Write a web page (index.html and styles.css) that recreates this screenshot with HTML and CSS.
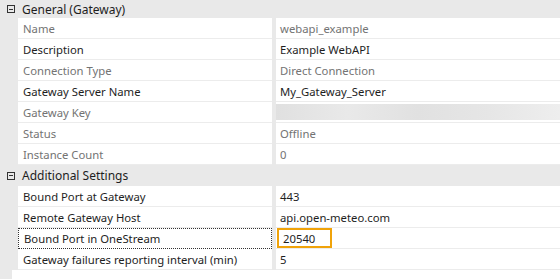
FILE: index.html
```html
<!DOCTYPE html>
<html lang="en">
<head>
    <meta charset="UTF-8">
    <title>Gateway Properties</title>
    <link rel="stylesheet" href="styles.css">
</head>
<body>
    <div class="grid">
        <!-- General -->
        <div class="group">
            <span class="toggle"></span>
            <span>General (Gateway)</span>
        </div>
        <div class="row readonly">
            <div class="gutter"></div>
            <div class="label">Name</div>
            <div class="split"></div>
            <div class="value">webapi_example</div>
        </div>
        <div class="row">
            <div class="gutter"></div>
            <div class="label">Description</div>
            <div class="split"></div>
            <div class="value">Example WebAPI</div>
        </div>
        <div class="row readonly">
            <div class="gutter"></div>
            <div class="label">Connection Type</div>
            <div class="split"></div>
            <div class="value">Direct Connection</div>
        </div>
        <div class="row">
            <div class="gutter"></div>
            <div class="label">Gateway Server Name</div>
            <div class="split"></div>
            <div class="value">My_Gateway_Server</div>
        </div>
        <div class="row readonly">
            <div class="gutter"></div>
            <div class="label">Gateway Key</div>
            <div class="split"></div>
            <div class="value"><div class="redacted"></div></div>
        </div>
        <div class="row readonly">
            <div class="gutter"></div>
            <div class="label">Status</div>
            <div class="split"></div>
            <div class="value">Offline</div>
        </div>
        <div class="row readonly">
            <div class="gutter"></div>
            <div class="label">Instance Count</div>
            <div class="split"></div>
            <div class="value">0</div>
        </div>

        <!-- Additional -->
        <div class="group second">
            <span class="toggle"></span>
            <span>Additional Settings</span>
        </div>
        <div class="row">
            <div class="gutter"></div>
            <div class="label">Bound Port at Gateway</div>
            <div class="split"></div>
            <div class="value">443</div>
        </div>
        <div class="row">
            <div class="gutter"></div>
            <div class="label">Remote Gateway Host</div>
            <div class="split"></div>
            <div class="value">api.open-meteo.com</div>
        </div>
        <div class="row focused">
            <div class="gutter"></div>
            <div class="label">Bound Port in OneStream</div>
            <div class="split"></div>
            <div class="value"><span class="edit">20540</span></div>
        </div>
        <div class="row">
            <div class="gutter"></div>
            <div class="label">Gateway failures reporting interval (min)</div>
            <div class="split"></div>
            <div class="value">5</div>
        </div>
        <div class="footer"></div>
    </div>
</body>
</html>
```

FILE: styles.css
```css
* { margin: 0; padding: 0; box-sizing: border-box; }
body { font-family: "Noto Sans", Arial, sans-serif; font-size: 11.3px; color: #1e1e1e; background: #e9e9e9; }

.grid { width: 560px; height: 279px; background: #e9e9e9; overflow: hidden; }

.group {
    height: 18px; display: flex; align-items: center;
    padding-left: 7px; gap: 7px; font-size: 12px;
}
.group.second { height: 21px; }

.toggle {
    width: 8px; height: 8px; border: 1px solid #333;
    display: flex; align-items: center; justify-content: center;
}
.toggle::after { content: ""; width: 4px; height: 1px; background: #333; }

.row { display: flex; height: 21px; }
.gutter { width: 18px; }
.label, .value {
    background: white; border-bottom: 1px solid #ececec;
    display: flex; align-items: center; white-space: nowrap;
}
.label { width: 254px; padding-left: 5px; }
.split { width: 4px; }
.value { flex: 1; padding-left: 4px; }

.readonly .label, .readonly .value { color: #737373; }

.redacted {
    width: 284px; height: 16px; margin-left: -4px;
    background: linear-gradient(90deg, #e0e0e0, #e9e9e9 25%, #e1e1e1 50%, #e6e6e6 75%, #eeeeee);
}

.focused .label { border: 1px dotted #333; }
.edit {
    display: flex; align-items: center;
    width: 55px; height: 20px; margin-left: -3px; padding-left: 4px;
    border: 2px solid #f0a30a;
}

.footer { height: 10px; margin-left: 12px; background: white; }
```
